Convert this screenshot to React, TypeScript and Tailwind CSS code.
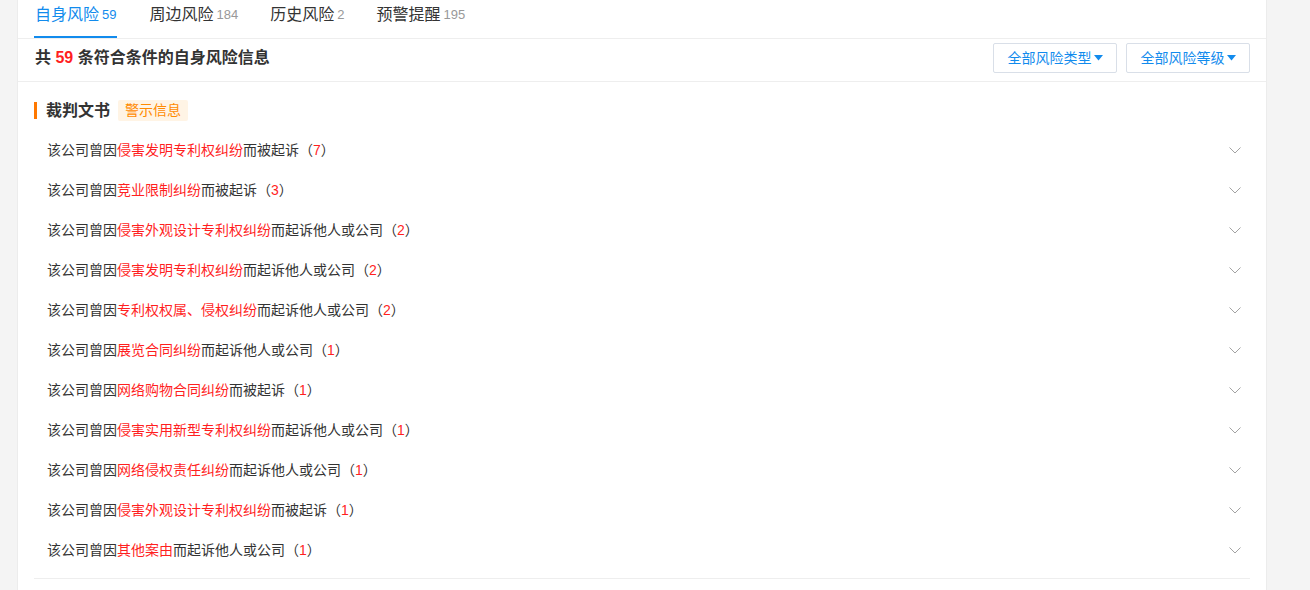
import React from 'react';

const FONT = 'font-["Liberation_Sans","Noto_Sans_CJK_SC",sans-serif]';

const TABS = [
  { label: '自身风险', count: 59, active: true },
  { label: '周边风险', count: 184 },
  { label: '历史风险', count: 2 },
  { label: '预警提醒', count: 195 },
];

const ROWS: [string, string, number][] = [
  ['侵害发明专利权纠纷', '而被起诉', 7],
  ['竞业限制纠纷', '而被起诉', 3],
  ['侵害外观设计专利权纠纷', '而起诉他人或公司', 2],
  ['侵害发明专利权纠纷', '而起诉他人或公司', 2],
  ['专利权权属、侵权纠纷', '而起诉他人或公司', 2],
  ['展览合同纠纷', '而起诉他人或公司', 1],
  ['网络购物合同纠纷', '而被起诉', 1],
  ['侵害实用新型专利权纠纷', '而起诉他人或公司', 1],
  ['网络侵权责任纠纷', '而起诉他人或公司', 1],
  ['侵害外观设计专利权纠纷', '而被起诉', 1],
  ['其他案由', '而起诉他人或公司', 1],
];

function Chevron() {
  return (
    <svg width="12" height="7" viewBox="0 0 12 7" fill="none">
      <path d="M0.5 0.5L6 6L11.5 0.5" stroke="#a3a3a3" strokeWidth="1" />
    </svg>
  );
}

function FilterButton({ label }: { label: string }) {
  return (
    <button className="w-[124px] h-[30px] border border-[#d9dfe8] rounded-[2px] bg-white text-[14px] text-[#128bed] flex items-center justify-center gap-[2px]">
      {label}
      <svg width="9" height="6" viewBox="0 0 9 6">
        <path d="M0 0H9L4.5 5.5Z" fill="#128bed" />
      </svg>
    </button>
  );
}

export default function App() {
  return (
    <div className={`${FONT} w-[1310px] min-h-[590px] bg-[#f4f4f4] pl-[17px]`}>
      <div className="w-[1250px] min-h-[590px] bg-white border-x border-[#ececec]">
        {/* tabs */}
        <div className="h-[39px] border-b border-[#eeeeee] flex items-end pl-[16px]">
          {TABS.map((t) => (
            <div
              key={t.label}
              className={`h-[39px] flex items-center pb-[6px] mr-[32px] border-b-2 ${
                t.active ? 'border-[#128bed] px-[1px]' : 'border-transparent'
              }`}
            >
              <span className={`text-[16px] ${t.active ? 'text-[#128bed]' : 'text-[#333]'}`}>{t.label}</span>
              <span className={`ml-[3px] text-[13px] ${t.active ? 'text-[#128bed]' : 'text-[#999]'}`}>{t.count}</span>
            </div>
          ))}
        </div>

        {/* summary */}
        <div className="h-[43px] border-b border-[#eeeeee] flex items-center justify-between pl-[17px] pr-[16px] pb-[5px]">
          <div className="text-[16px] font-bold text-[#333]">
            共 <span className="text-[#ff1f1f]">59</span> 条符合条件的自身风险信息
          </div>
          <div className="flex gap-[9px] pt-[1px]">
            <FilterButton label="全部风险类型" />
            <FilterButton label="全部风险等级" />
          </div>
        </div>

        {/* section */}
        <div className="px-[16px] pt-[18px]">
          <div className="flex items-center h-[21px]">
            <div className="w-[3px] h-[17px] bg-[#ff7800]" />
            <span className="ml-[9px] text-[16px] font-bold text-[#333]">裁判文书</span>
            <span className="ml-[8px] h-[21px] px-[7px] flex items-center bg-[#fff4e5] text-[#ff8a00] text-[14px] rounded-[2px]">
              警示信息
            </span>
          </div>

          <div className="mt-[9px] pb-[8px] border-b border-[#eeeeee]">
            {ROWS.map(([cause, tail, n], i) => (
              <div key={i} className="h-[40px] flex items-center justify-between pl-[13px] pr-[9px]">
                <div className="text-[14px] text-[#333]">
                  该公司曾因<span className="text-[#ff1f1f]">{cause}</span>
                  {tail}（<span className="text-[#ff1f1f]">{n}</span>）
                </div>
                <Chevron />
              </div>
            ))}
          </div>
        </div>
      </div>
    </div>
  );
}
